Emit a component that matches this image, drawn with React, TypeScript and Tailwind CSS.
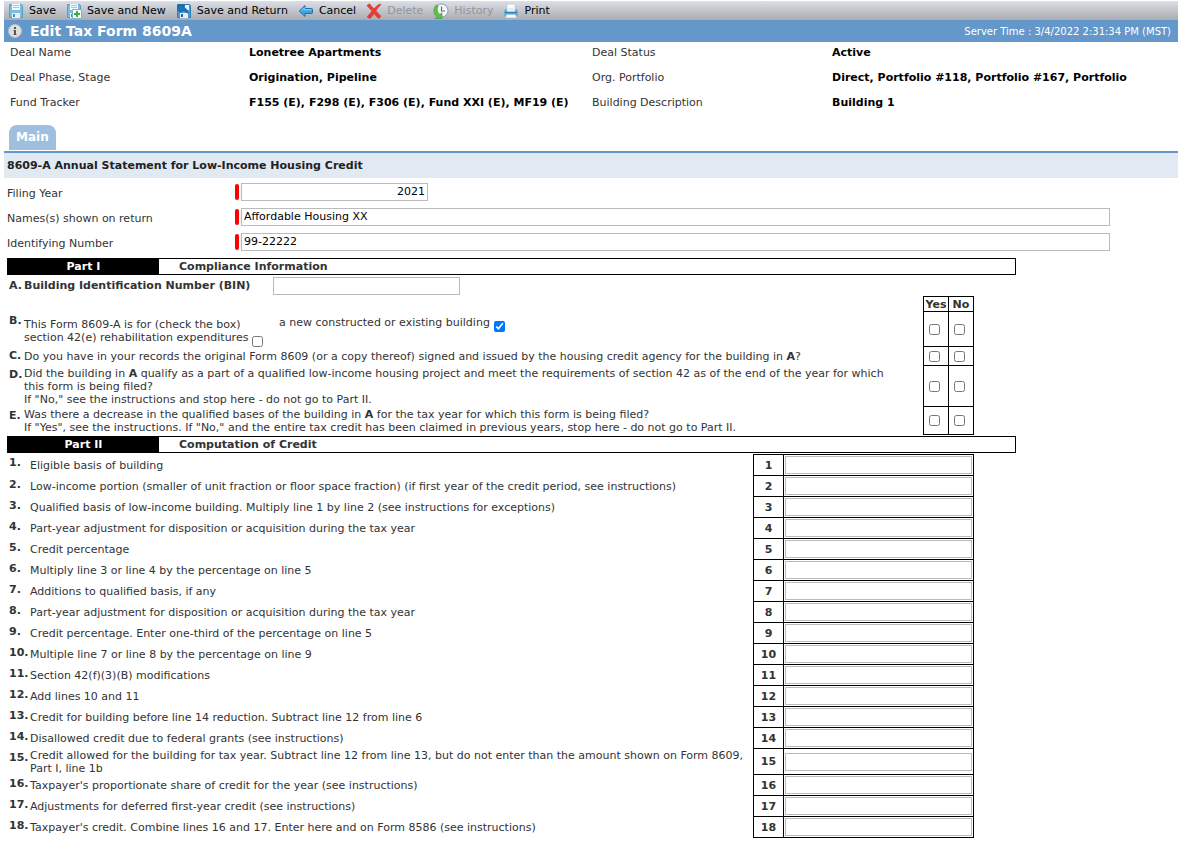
import type { ReactNode } from 'react';

const A = <b>A</b>;

const inputStyle = 'h-[18px] border border-[#bbbbbb] bg-white px-0.5 text-[11px] leading-[13px] text-black';

function FloppyShape() {
    return (
        <>
            <path d="M1.5 1.5h12l1 1v12h-13z" fill="#79bfe3" stroke="#5b9cc4" />
            <path d="M4 1h8v6H4z" fill="#f3f9fd" />
            <path d="M5 2.5h6M5 4.5h6" stroke="#a9c4d6" />
            <path d="M4 10h8v5H4z" fill="#e4eff6" />
            <path d="M5 11h2v3H5z" fill="#4f8fb8" />
        </>
    );
}

function SaveIcon() {
    return (
        <svg viewBox="0 0 16 16" className="size-4">
            <FloppyShape />
        </svg>
    );
}

function SaveNewIcon() {
    return (
        <svg viewBox="0 0 16 16" className="size-4">
            <FloppyShape />
            <path d="M6.5 6.5h9v9h-9z" fill="#f4fbfb" stroke="#86aebf" />
            <path d="M11 8v6M8 11h6" stroke="#3fae49" strokeWidth="2" />
        </svg>
    );
}

function SaveReturnIcon() {
    return (
        <svg viewBox="0 0 16 16" className="size-4">
            <path d="M1.5 1.5h12l1 1v12h-13z" fill="#4a9bd4" stroke="#2f7fb9" />
            <path d="M9 2h4v5H9zM4 10h8v5H4z" fill="#e4f1fa" />
            <path d="M5 11h2v3H5z" fill="#1f679c" />
            <path d="M2 2h7L7 4.2c2.5.3 4.5 2.3 5 6.3-1.600-2.200-3.400-3-5.600-2.900L4.500 9.500 2 7z" fill="#1d76b8" stroke="#0c5289" strokeWidth=".6" />
        </svg>
    );
}

function CancelIcon() {
    return (
        <svg viewBox="0 0 16 16" className="size-4">
            <path d="M1.200 8 7 2.600v3h6.500c.7 0 1 .3 1 1v2.800c0 .7-.3 1-1 1H7v3z" fill="#43a4e2" stroke="#1a6ead" strokeLinejoin="round" />
            <path d="M3 7.700 6.300 4.700v2h7" fill="none" stroke="#8fd0f6" />
        </svg>
    );
}

function DeleteIcon() {
    return (
        <svg viewBox="0 0 16 16" className="size-4">
            <path d="M1 2.500 3.500.8C5 2.800 6.500 4.500 8 6c2-2.500 4-4 6.200-5l.6.8C12.500 4 11 5.800 9.900 8c1.500 2 3.200 3.700 5.100 5.300L12.700 15.500C10.900 14 9.500 12.400 8.200 10.600 6.800 12.400 5.500 14 4 15.500l-2.800-1.600C3 12 4.600 10 6.100 7.900 4.200 6 2.500 4.400 1 2.500z" fill="#ef3b34" stroke="#c9231f" strokeWidth=".6" />
        </svg>
    );
}

function HistoryIcon() {
    return (
        <svg viewBox="0 0 16 16" className="size-4">
            <circle cx="8.500" cy="7.500" r="6.500" fill="#f6f9fb" stroke="#8ba3b5" />
            <path d="M8.500 3.500v4.500h3.500" fill="none" stroke="#536b80" strokeWidth="1.200" />
            <path d="M3.700 1.800C-.2 5.200 0 11 4 13.500L2.500 15.500h6.500V9.800L7 11.300C4.300 10 3.200 6.500 5.200 3.400z" fill="#5fc04a" stroke="#39952c" strokeWidth=".6" />
        </svg>
    );
}

function PrintIcon() {
    return (
        <svg viewBox="0 0 16 16" className="size-4">
            <path d="M4 1h8v7H4z" fill="#f5fafd" stroke="#b6c9d6" strokeWidth=".6" />
            <path d="M1 7.500 2.500 6h11L15 7.500V13H1z" fill="#69b1e0" />
            <path d="M4 5h8v4H4z" fill="#dff0fa" />
            <path d="M2 9.500h12" stroke="#2f7db4" strokeWidth="1.500" />
            <path d="M3.500 11.500h9l1 3.500h-11z" fill="#f4f9fc" stroke="#9db9ca" strokeWidth=".6" />
        </svg>
    );
}

function InfoIcon() {
    return (
        <svg viewBox="0 0 14 14" className="size-3.5">
            <circle cx="7" cy="7" r="6.500" fill="#dedede" stroke="#b9bfc6" />
            <path d="M6 3h2v2H6zM5.500 6H8v4h.5v1h-3v-1H6V7h-.5z" fill="#555" />
        </svg>
    );
}

const toolbar = [
    { label: 'Save', Icon: SaveIcon },
    { label: 'Save and New', Icon: SaveNewIcon },
    { label: 'Save and Return', Icon: SaveReturnIcon },
    { label: 'Cancel', Icon: CancelIcon },
    { label: 'Delete', Icon: DeleteIcon, disabled: true },
    { label: 'History', Icon: HistoryIcon, disabled: true },
    { label: 'Print', Icon: PrintIcon }
];

const dealInfo = [
    ['Deal Name', 'Lonetree Apartments', 'Deal Status', 'Active'],
    ['Deal Phase, Stage', 'Origination, Pipeline', 'Org. Portfolio', 'Direct, Portfolio #118, Portfolio #167, Portfolio'],
    ['Fund Tracker', 'F155 (E), F298 (E), F306 (E), Fund XXI (E), MF19 (E)', 'Building Description', 'Building 1']
];

const questions: { letter: string; height: string; text: ReactNode }[] = [
    {
        letter: 'B',
        height: 'h-[35px]',
        text: (
            <div className="flex items-start">
                <div className="w-[255px] pt-0.5">
                    <p>This Form 8609-A is for (check the box)</p>
                    <label className="flex items-center gap-1 whitespace-nowrap">
                        section 42(e) rehabilitation expenditures
                        <input type="checkbox" className="mt-1 -mb-1 size-[11px]" />
                    </label>
                </div>
                <label className="flex items-center gap-1">
                    a new constructed or existing building
                    <input type="checkbox" defaultChecked className="mt-1 -mb-1 size-[11px]" />
                </label>
            </div>
        )
    },
    {
        letter: 'C',
        height: 'h-[19px]',
        text: <p>Do you have in your records the original Form 8609 (or a copy thereof) signed and issued by the housing credit agency for the building in {A}?</p>
    },
    {
        letter: 'D',
        height: 'h-[41px]',
        text: (
            <>
                <p>Did the building in {A} qualify as a part of a qualified low-income housing project and meet the requirements of section 42 as of the end of the year for which this form is being filed?</p>
                <p>If "No," see the instructions and stop here - do not go to Part II.</p>
            </>
        )
    },
    {
        letter: 'E',
        height: 'h-[28px]',
        text: (
            <>
                <p>Was there a decrease in the qualified bases of the building in {A} for the tax year for which this form is being filed?</p>
                <p>If "Yes", see the instructions. If "No," and the entire tax credit has been claimed in previous years, stop here - do not go to Part II.</p>
            </>
        )
    }
];

const creditLines = [
    'Eligible basis of building',
    'Low-income portion (smaller of unit fraction or floor space fraction) (if first year of the credit period, see instructions)',
    'Qualified basis of low-income building. Multiply line 1 by line 2 (see instructions for exceptions)',
    'Part-year adjustment for disposition or acquisition during the tax year',
    'Credit percentage',
    'Multiply line 3 or line 4 by the percentage on line 5',
    'Additions to qualified basis, if any',
    'Part-year adjustment for disposition or acquisition during the tax year',
    'Credit percentage. Enter one-third of the percentage on line 5',
    'Multiple line 7 or line 8 by the percentage on line 9',
    'Section 42(f)(3)(B) modifications',
    'Add lines 10 and 11',
    'Credit for building before line 14 reduction. Subtract line 12 from line 6',
    'Disallowed credit due to federal grants (see instructions)',
    'Credit allowed for the building for tax year. Subtract line 12 from line 13, but do not enter than the amount shown on Form 8609, Part I, line 1b',
    "Taxpayer's proportionate share of credit for the year (see instructions)",
    'Adjustments for deferred first-year credit (see instructions)',
    "Taxpayer's credit. Combine lines 16 and 17. Enter here and on Form 8586 (see instructions)"
];

function PartBar({ part, title }: { part: string; title: string }) {
    return (
        <h3 className="flex border border-black font-bold leading-[15px]">
            <span className="w-[151px] bg-black text-center text-white">{part}</span>
            <span className="pl-5">{title}</span>
        </h3>
    );
}

function RequiredField({ id, label, value, className }: { id: string; label: string; value: string; className: string }) {
    return (
        <div className="flex h-[25px] items-center">
            <label htmlFor={id} className="w-[228px] shrink-0 pt-1">{label}</label>
            <span className="mr-0.5 h-4 w-1 shrink-0 rounded-sm bg-[#ff0000]" />
            <input id={id} defaultValue={value} className={`${inputStyle} ${className}`} />
        </div>
    );
}

export default function App() {
    return (
        <div className="min-h-screen bg-white pt-px pl-1 font-['Verdana','DejaVu_Sans',sans-serif] text-[11px] leading-[13px] text-[#333333]">
            {/* Toolbar */}
            <div className="flex h-[19px] items-center gap-2.5 bg-linear-to-b from-[#dcdfe7] to-[#a9adb1] pl-1">
                {toolbar.map(({ label, Icon, disabled }) => (
                    <button key={label} type="button" disabled={disabled} className="flex items-center gap-[5px] whitespace-nowrap text-black disabled:text-[#929599]">
                        <Icon />
                        {label}
                    </button>
                ))}
            </div>

            {/* Title */}
            <header className="flex h-[22px] items-center justify-between bg-[#6497ca] pr-[7px] pl-1 text-white">
                <h1 className="flex items-center gap-2 text-[14px] font-bold">
                    <InfoIcon />
                    Edit Tax Form 8609A
                </h1>
                <span className="text-[10px]">Server Time : 3/4/2022 2:31:34 PM (MST)</span>
            </header>

            {/* Deal info */}
            <dl className="grid grid-cols-[239px_343px_240px_1fr] gap-y-3 pt-1 pl-1.5 whitespace-nowrap">
                {dealInfo.flat().map((text, i) =>
                    i % 2 ? <dd key={i} className="font-bold text-black">{text}</dd> : <dt key={i}>{text}</dt>
                )}
            </dl>

            {/* Tabs */}
            <nav className="mt-4 border-b-2 border-[#6497ca] pb-px pl-[5px]">
                <button type="button" className="block h-[25px] rounded-t-lg bg-[#a0bfdf] px-[7px] text-[12px] font-bold text-white">Main</button>
            </nav>

            <h2 className="bg-[#e1e9f3] py-1.5 pl-[3px] font-bold text-[#222222]">8609-A Annual Statement for Low-Income Housing Credit</h2>

            <form className="pt-px pl-[3px]">
                <div className="pr-[68px] pb-1">
                    <RequiredField id="filing-year" label="Filing Year" value="2021" className="w-[187px] text-right" />
                    <RequiredField id="names" label="Names(s) shown on return" value="Affordable Housing XX" className="min-w-0 flex-1" />
                    <RequiredField id="identifying-number" label="Identifying Number" value="99-22222" className="min-w-0 flex-1" />
                </div>

                <div className="max-w-[1009px]">
                    <PartBar part="Part I" title="Compliance Information" />
                    <div className="pr-[42px] pl-0.5">
                        <div className="flex h-[21px] items-center font-bold">
                            <span className="w-[15px]">A.</span>
                            <label htmlFor="bin" className="w-[249px]">Building Identification Number (BIN)</label>
                            <input id="bin" className={`${inputStyle} w-[187px]`} />
                        </div>
                        <table className="w-full table-fixed border-separate border-spacing-0">
                            <colgroup>
                                <col className="w-[15px]" />
                                <col />
                                <col className="w-[25px]" />
                                <col className="w-[26px]" />
                            </colgroup>
                            <thead>
                                <tr className="h-4">
                                    <td colSpan={2} />
                                    <th scope="col" className="border-y border-l border-black pt-px">Yes</th>
                                    <th scope="col" className="border border-black pt-px">No</th>
                                </tr>
                            </thead>
                            <tbody>
                                {questions.map(({ letter, height, text }) => (
                                    <tr key={letter} className={height}>
                                        <th scope="row" className="pt-0.5 text-left align-top">{letter}.</th>
                                        <td className="pr-5 align-middle">{text}</td>
                                        <td className="border-b border-l border-black pl-[5px] align-middle">
                                            <input type="checkbox" aria-label={`${letter} Yes`} className="block size-[11px]" />
                                        </td>
                                        <td className="border-x border-b border-black pl-[5px] align-middle">
                                            <input type="checkbox" aria-label={`${letter} No`} className="block size-[11px]" />
                                        </td>
                                    </tr>
                                ))}
                            </tbody>
                        </table>
                    </div>

                    <div className="mt-px">
                        <PartBar part="Part II" title="Computation of Credit" />
                    </div>
                    <div className="mt-px pr-[42px] pl-0.5">
                        <table className="w-full table-fixed border-separate border-spacing-0">
                            <colgroup>
                                <col className="w-[21px]" />
                                <col />
                                <col className="w-[30px]" />
                                <col className="w-[191px]" />
                            </colgroup>
                            <tbody>
                                {creditLines.map((line, i) => (
                                    <tr key={i} className="group h-[21px] first:h-[22px]">
                                        <th scope="row" className="pt-0.5 text-left align-top whitespace-nowrap">{i + 1}.</th>
                                        <td className="pr-2 align-middle">
                                            <label htmlFor={`line-${i + 1}`}>{line}</label>
                                        </td>
                                        <td className="border-b border-l border-black text-center align-middle font-bold group-first:border-t">{i + 1}</td>
                                        <td className="border-x border-b border-black px-px align-middle group-first:border-t">
                                            <input id={`line-${i + 1}`} className={`${inputStyle} block w-full`} />
                                        </td>
                                    </tr>
                                ))}
                            </tbody>
                        </table>
                    </div>
                </div>
            </form>
        </div>
    );
}
